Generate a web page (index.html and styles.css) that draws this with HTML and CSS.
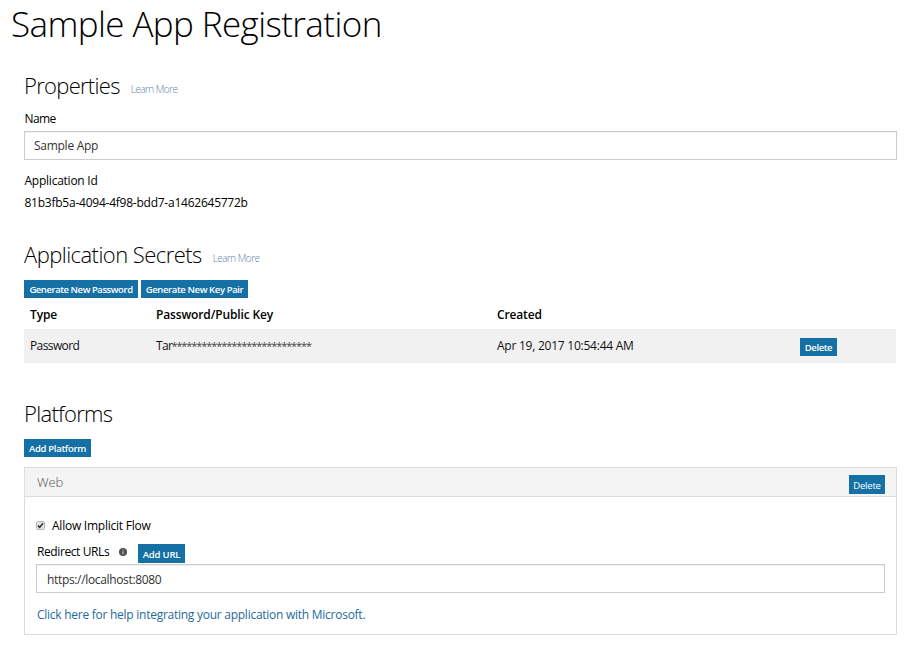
FILE: index.html
```html
<!DOCTYPE html>
<html lang="en">
<head>
<meta charset="utf-8">
<title>Sample App Registration</title>
<link rel="stylesheet" href="styles.css">
</head>
<body>
<h1>Sample App Registration</h1>
<main>
  <section class="properties">
    <div class="heading"><h2>Properties</h2><a class="more" href="#">Learn More</a></div>
    <label class="name-label" for="name">Name</label>
    <input class="field" id="name" type="text" value="Sample App">
    <div class="id-label">Application Id</div>
    <div class="app-id">81b3fb5a-4094-4f98-bdd7-a1462645772b</div>
  </section>

  <section class="secrets">
    <div class="heading"><h2 class="wide">Application Secrets</h2><a class="more" href="#">Learn More</a></div>
    <div class="actions">
      <button class="btn generate-password">Generate New Password</button>
      <button class="btn generate-key">Generate New Key Pair</button>
    </div>
    <table>
      <colgroup><col class="c-type"><col class="c-key"><col class="c-created"><col></colgroup>
      <thead>
        <tr><th>Type</th><th>Password/Public Key</th><th>Created</th><th></th></tr>
      </thead>
      <tbody>
        <tr>
          <td class="tight">Password</td>
          <td><span class="tight">Tar</span><span class="mask">****************************</span></td>
          <td>Apr 19, 2017 10:54:44 AM</td>
          <td><button class="btn delete-secret">Delete</button></td>
        </tr>
      </tbody>
    </table>
  </section>

  <section class="platforms">
    <div class="heading"><h2>Platforms</h2></div>
    <button class="btn add-platform">Add Platform</button>
    <div class="panel">
      <div class="panel-head"><span class="panel-title">Web</span><button class="btn delete-platform">Delete</button></div>
      <div class="panel-body">
        <label class="check">
          <svg width="9" height="9" viewBox="0 0 9 9"><rect x=".5" y=".5" width="8" height="8" rx="1" fill="#e4e4e4" stroke="#b4b4b4"/><path d="M2 4.6 3.7 6.4 7 2.2" fill="none" stroke="#333" stroke-width="1.6"/></svg>
          <span>Allow Implicit Flow</span>
        </label>
        <div class="redirect">
          <span class="redirect-label">Redirect URLs</span>
          <svg class="info" width="8" height="8" viewBox="0 0 8 8"><circle cx="4" cy="4" r="4" fill="#505050"/><path d="M4 3.2v3M4 1.5v1" fill="none" stroke="#bbb" stroke-width="1.2"/></svg>
          <button class="btn add-url">Add URL</button>
        </div>
        <input class="field url" type="text" aria-label="Redirect URL" value="https://localhost:8080">
        <a class="help" href="#">Click here for help integrating your application with Microsoft.</a>
      </div>
    </div>
  </section>
</main>
</body>
</html>
```
FILE: styles.css
```css
* { box-sizing: border-box; }

body {
  margin: 0;
  background: #fff;
  color: #000;
  font: 12px/20px "Open Sans", "Noto Sans", sans-serif;
  letter-spacing: -0.24px;
}

h1, h2 { margin: 0; font-weight: 300; white-space: nowrap; }

h1 {
  height: 72px;
  padding-left: 11px;
  font-size: 35px;
  line-height: 48px;
  letter-spacing: -0.6px;
}

h2 { font-size: 22px; line-height: 26px; letter-spacing: -0.7px; }
h2.wide { letter-spacing: -0.55px; }

main { padding: 0 20px 0 24px; }
a { text-decoration: none; }
.heading { display: flex; align-items: baseline; gap: 11px; height: 26px; }

.more {
  position: relative;
  top: -1px;
  color: #5f82a8;
  font-size: 10px;
  font-weight: 300;
  letter-spacing: -0.55px;
}

.name-label { display: block; margin-top: 11px; padding-left: 0.5px; letter-spacing: -0.6px; }

.field {
  display: block;
  width: 873px;
  height: 29px;
  margin: 2px 0 0;
  padding: 0 9px;
  border: 1px solid #ccc;
  border-radius: 0;
  outline: 0;
  background: #fff;
  box-shadow: inset 0 1px 1px rgba(0, 0, 0, 0.06);
  color: #333;
  font: inherit;
  letter-spacing: -0.27px;
}

.id-label { margin-top: 11px; padding-left: 0.5px; }
.app-id { margin-top: 2px; padding-left: 0.5px; }

.secrets { margin-top: 28px; }
.actions { display: flex; gap: 3px; margin-top: 13px; }

.btn {
  display: block;
  height: 18px;
  margin: 0;
  padding: 1px 0 0;
  border: 0;
  border-radius: 0;
  background: #1570a6;
  color: #fff;
  font: 600 9.5px/17px "Open Sans", "Noto Sans", sans-serif;
  letter-spacing: -0.4px;
  text-align: center;
  white-space: nowrap;
}
.generate-password { width: 114px; letter-spacing: -0.44px; }
.generate-key { width: 107px; letter-spacing: -0.38px; }
.delete-secret { width: 37px; }
.add-platform { width: 67px; margin-top: 13px; letter-spacing: -0.3px; }
.delete-platform { width: 36px; height: 19px; margin-top: 4px; padding-top: 2px; font-weight: 400; letter-spacing: -0.2px; }
.add-url { width: 47px; height: 19px; margin: 3px 0 0 11px; padding-top: 2px; letter-spacing: -0.2px; }

table { width: 872px; table-layout: fixed; border-collapse: collapse; }
.c-type { width: 126px; }
.c-key { width: 341px; }
.c-created { width: 303px; }
th, td { padding: 0 6px; text-align: left; vertical-align: middle; }
th { height: 31px; padding-top: 2px; font-weight: 600; letter-spacing: -0.14px; }
td { height: 34px; background: #f1f1f1; color: #111; }
td .btn { margin-top: 2px; }
.tight { letter-spacing: -0.6px; }
.mask { margin-left: -1px; color: #444; font-size: 11px; letter-spacing: -1.07px; }

.platforms { margin-top: 37px; }

.panel { width: 873px; height: 168px; margin-top: 10px; border: 1px solid #ddd; }
.panel-head {
  display: flex;
  align-items: center;
  justify-content: space-between;
  height: 29px;
  padding: 0 11px 0 12px;
  border-bottom: 1px solid #ddd;
  background: #f4f4f4;
}
.panel-title { color: #555; font-size: 13px; font-weight: 300; letter-spacing: -0.1px; }

.panel-body { padding: 18px 11px 0; }
.check { display: flex; align-items: center; gap: 7px; letter-spacing: -0.24px; }
.check span { padding-top: 2px; line-height: 18px; }
.redirect { display: flex; align-items: center; height: 28px; padding: 5px 0 0 1px; }
.redirect-label { width: 82px; letter-spacing: -0.4px; }
.panel-body .url { width: 849px; margin: 1px 0 0; padding: 2px 10px 0; letter-spacing: -0.34px; }
.help { display: block; margin: 12px 0 0 1px; color: #1f6a9c; letter-spacing: -0.26px; }
```
